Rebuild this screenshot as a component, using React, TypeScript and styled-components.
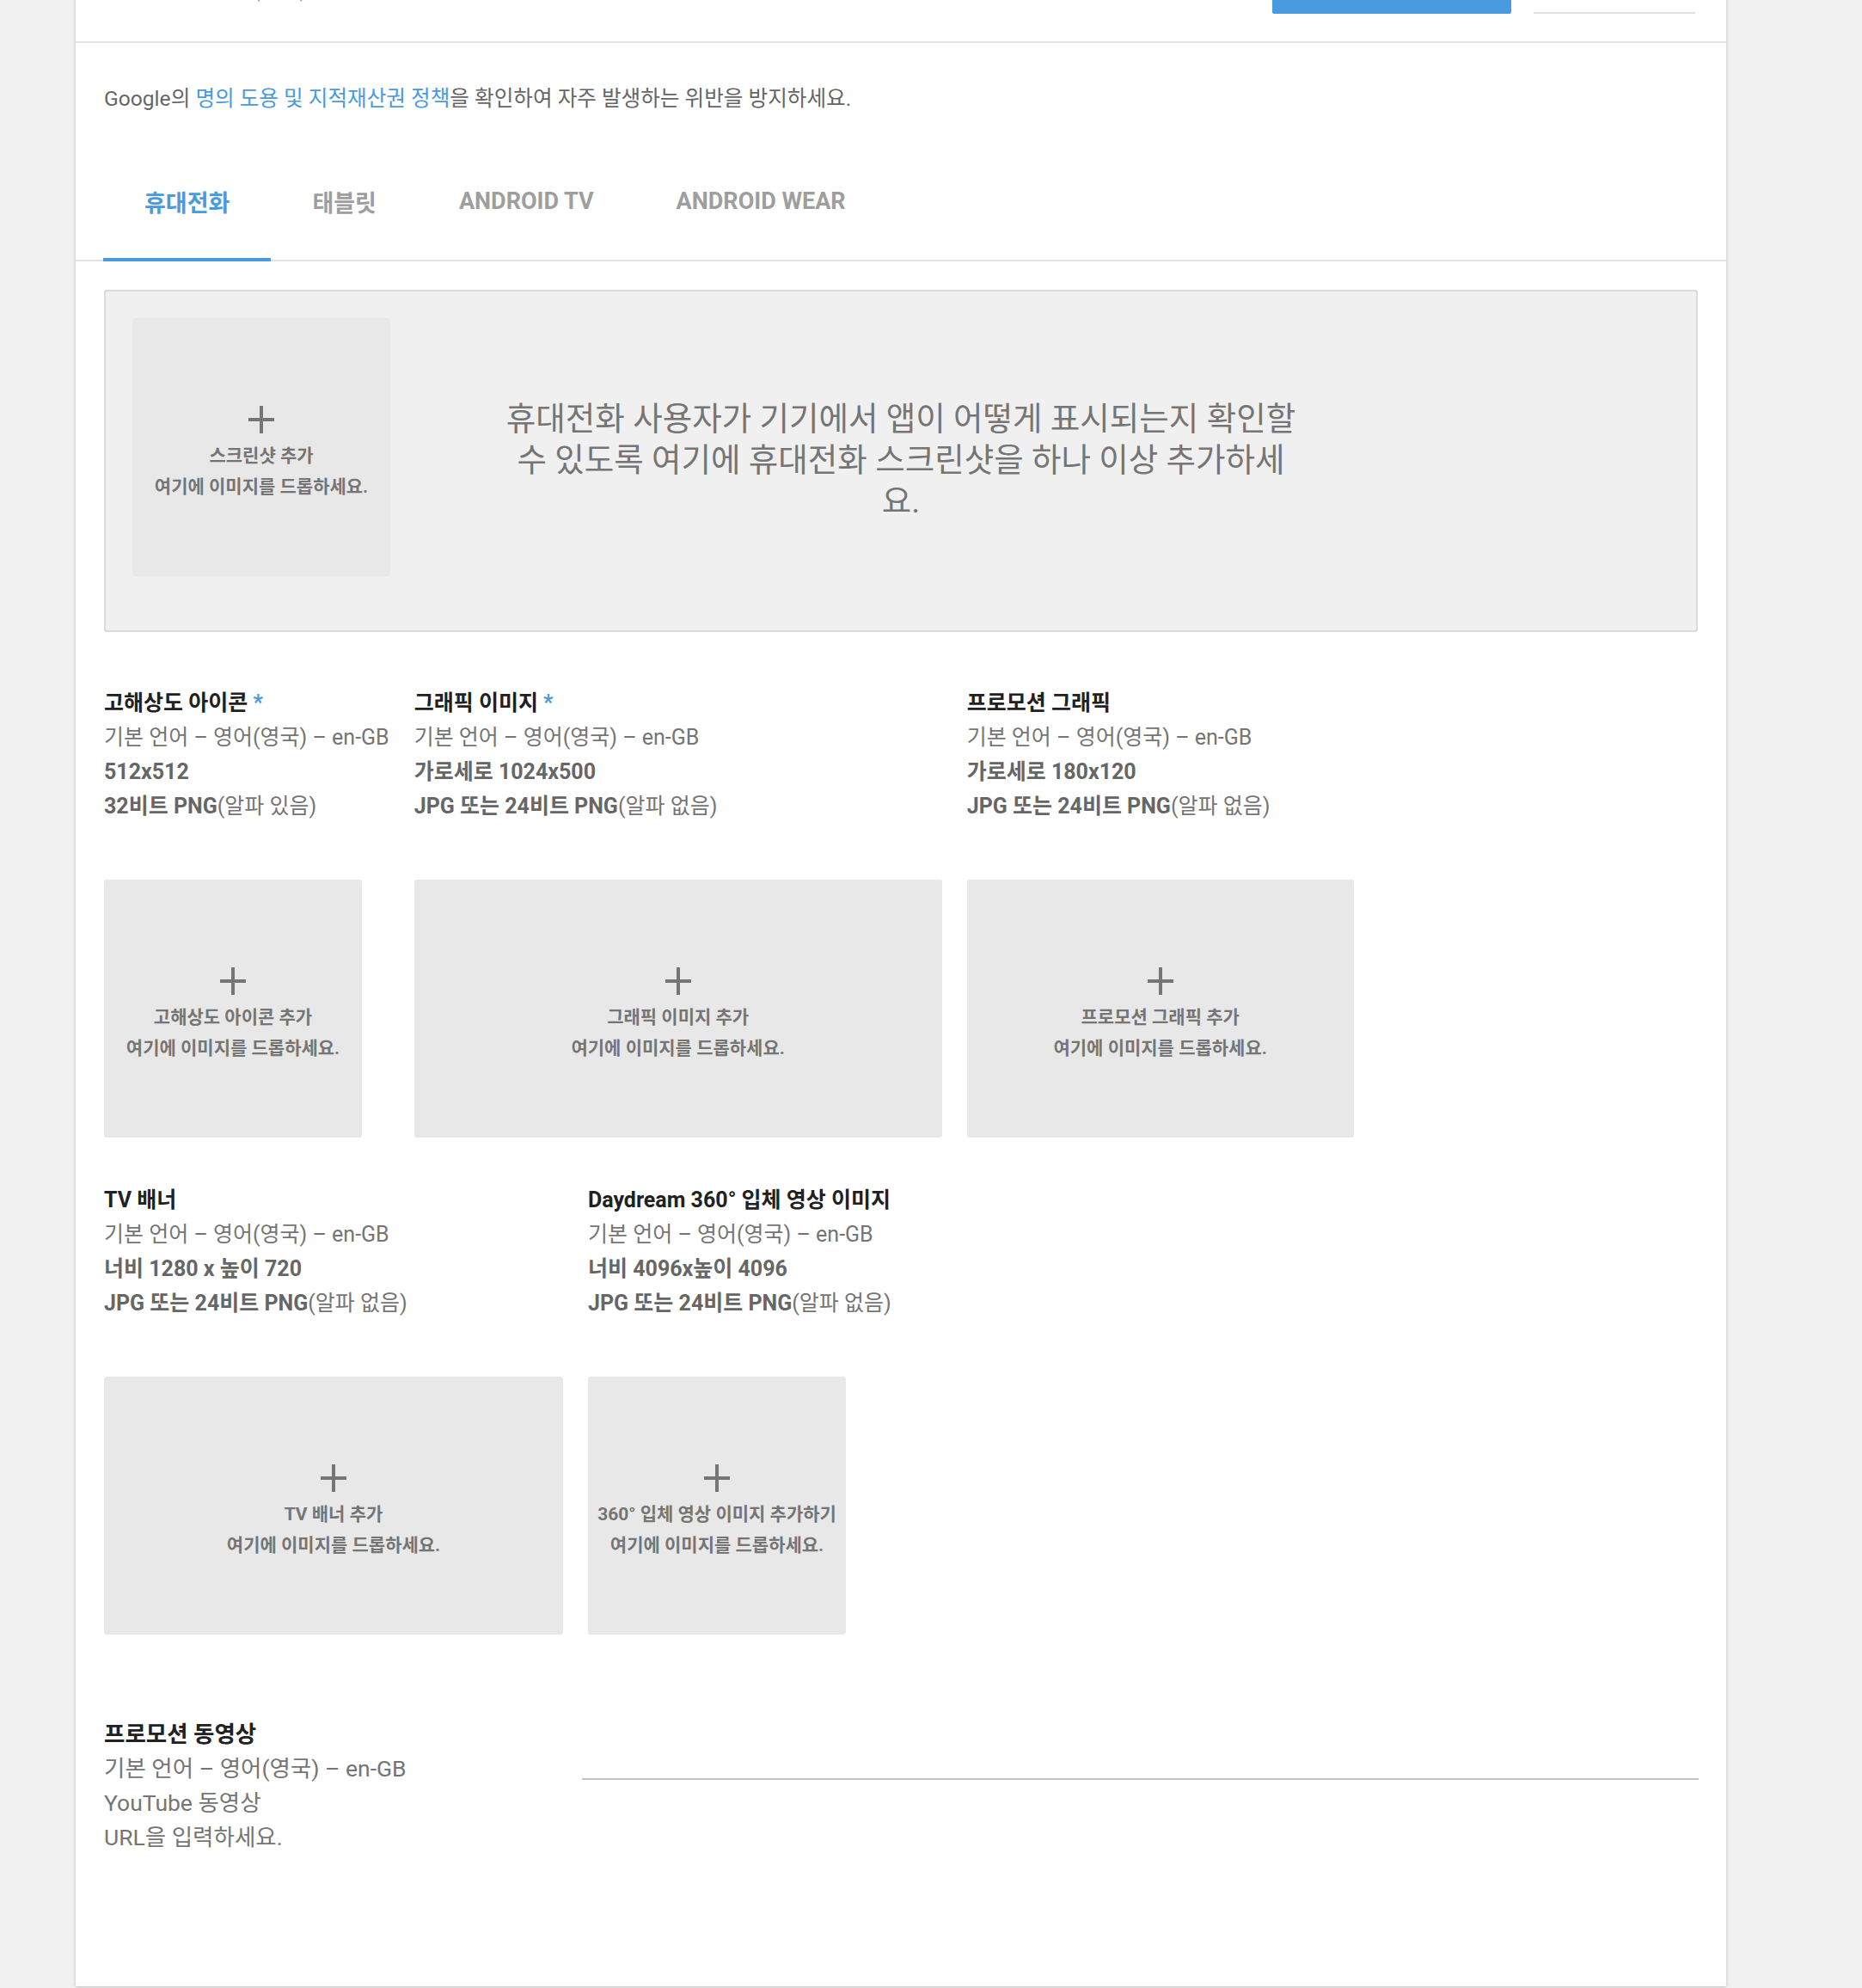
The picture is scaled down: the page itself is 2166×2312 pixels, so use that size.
import React from "react";
import styled, { createGlobalStyle } from "styled-components";

const GlobalStyle = createGlobalStyle`
  *, *::before, *::after { box-sizing: border-box; }
  html, body { margin: 0; padding: 0; }
  body {
    background: #f1f1f1;
    font-family: Roboto, "Noto Sans CJK KR", sans-serif;
    color: #757575;
    overflow: hidden;
  }
`;

const BLUE = "#4a9ae0";

const Page = styled.div`
  padding-left: 88px;
  padding-bottom: 2px;
  height: 2312px;
  overflow: hidden;
`;

const Panel = styled.main`
  width: 1920px;
  margin-top: -56px;
  background: #fff;
  box-shadow: 0 1px 4px rgba(0, 0, 0, 0.22);
`;

const Header = styled.header`
  height: 106px;
  display: flex;
  align-items: flex-start;
  padding: 0 36px 0 33px;
  border-bottom: 2px solid #e2e2e2;
`;

const HeaderTitle = styled.div`
  flex: 1;
  padding-top: 24px;
  font-size: 25px;
  line-height: 40px;
  color: #9e9e9e;
`;

const PrimaryButton = styled.button`
  width: 278px;
  height: 72px;
  border: none;
  border-radius: 2px;
  background: ${BLUE};
  margin-right: 26px;
  padding: 0;
`;

const HeaderField = styled.div`
  width: 188px;
  height: 72px;
  border-bottom: 2px solid #e0e0e0;
`;

const Notice = styled.p`
  margin: 0;
  padding: 45px 33px 0;
  font-size: 24.6px;
  line-height: 40px;
  color: #666;
`;

const Link = styled.a`
  color: ${BLUE};
  text-decoration: none;
`;

const TabBar = styled.nav`
  display: flex;
  margin-top: 25px;
  padding: 0 32px;
  border-bottom: 2px solid #e2e2e2;
`;

const Tab = styled.div<{ $active?: boolean }>`
  height: 144px;
  margin-bottom: -2px;
  padding: 8px 48px 0;
  display: flex;
  align-items: center;
  font-size: 27px;
  font-weight: 700;
  color: ${(p) => (p.$active ? BLUE : "#9e9e9e")};
  border-bottom: 4px solid ${(p) => (p.$active ? BLUE : "transparent")};
`;

const ScreenshotZone = styled.section`
  margin: 33px 33px 0;
  padding: 31px 31px 63px;
  border: 2px solid #dadada;
  border-radius: 3px;
  background: #f0f0f0;
  display: grid;
  grid-template-columns: 300px 1fr 300px;
  align-items: center;
`;

const ZoneMessage = styled.p`
  margin: 0;
  padding-top: 30px;
  text-align: center;
  font-size: 37.5px;
  line-height: 48px;
  color: #757575;
  white-space: nowrap;
`;

const DropTile = styled.div<{ $w: number }>`
  width: ${(p) => p.$w}px;
  height: 300px;
  border-radius: 3px;
  background: #e8e8e8;
  display: flex;
  flex-direction: column;
  align-items: center;
  justify-content: center;
  padding-top: 16px;
  color: #757575;
  font-size: 21px;
  font-weight: 700;
  line-height: 36px;
  white-space: nowrap;
`;

const PlusIcon = styled.svg`
  display: block;
  margin-bottom: 8px;
  fill: #757575;
`;

const Assets = styled.section`
  display: flex;
  flex-direction: column;
  gap: 53px;
  padding: 63px 33px 0;
`;

const AssetRow = styled.div`
  display: flex;
  align-items: flex-start;
  gap: 29px;
`;

const AssetItem = styled.div`
  display: flex;
  flex-direction: column;
  align-items: flex-start;
`;

const Spec = styled.div<{ $size?: number }>`
  margin-bottom: 65px;
  font-size: ${(p) => p.$size ?? 25}px;
  line-height: 40px;
  white-space: nowrap;
`;

const SpecTitle = styled.div`
  font-weight: 700;
  color: #212121;
`;

const Required = styled.span`
  color: ${BLUE};
`;

const SpecLine = styled.div<{ $strong?: boolean }>`
  color: ${(p) => (p.$strong ? "#666" : "#757575")};
  font-weight: ${(p) => (p.$strong ? 700 : 400)};
`;

const Strong = styled.span`
  font-weight: 700;
  color: #666;
`;

const VideoSection = styled.section`
  display: grid;
  grid-template-columns: 556px 1fr;
  margin-top: 96px;
  padding: 0 32px 88px 33px;
`;

const VideoField = styled.div`
  height: 73px;
  border-bottom: 2px solid #c4c4c4;
`;

const Plus = () => (
  <PlusIcon width="30" height="32" viewBox="0 0 30 32" aria-hidden>
    <rect x="13" y="0" width="4" height="32" />
    <rect x="0" y="14" width="30" height="4" />
  </PlusIcon>
);

type Asset = {
  title: string;
  required?: boolean;
  size: string;
  fmtBold: string;
  fmtRest: string;
  tileW: number;
  label: string;
};

const rows: Asset[][] = [
  [
    {
      title: "고해상도 아이콘",
      required: true,
      size: "512x512",
      fmtBold: "32비트 PNG",
      fmtRest: "(알파 있음)",
      tileW: 300,
      label: "고해상도 아이콘 추가",
    },
    {
      title: "그래픽 이미지",
      required: true,
      size: "가로세로 1024x500",
      fmtBold: "JPG 또는 24비트 PNG",
      fmtRest: "(알파 없음)",
      tileW: 614,
      label: "그래픽 이미지 추가",
    },
    {
      title: "프로모션 그래픽",
      size: "가로세로 180x120",
      fmtBold: "JPG 또는 24비트 PNG",
      fmtRest: "(알파 없음)",
      tileW: 450,
      label: "프로모션 그래픽 추가",
    },
  ],
  [
    {
      title: "TV 배너",
      size: "너비 1280 x 높이 720",
      fmtBold: "JPG 또는 24비트 PNG",
      fmtRest: "(알파 없음)",
      tileW: 534,
      label: "TV 배너 추가",
    },
    {
      title: "Daydream 360° 입체 영상 이미지",
      size: "너비 4096x높이 4096",
      fmtBold: "JPG 또는 24비트 PNG",
      fmtRest: "(알파 없음)",
      tileW: 300,
      label: "360° 입체 영상 이미지 추가하기",
    },
  ],
];

const LANG = "기본 언어 – 영어(영국) – en-GB";
const DROP = "여기에 이미지를 드롭하세요.";

export default function App() {
  return (
    <>
      <GlobalStyle />
      <Page>
        <Panel>
          <Header>
            <HeaderTitle>{LANG}</HeaderTitle>
            <PrimaryButton aria-label="저장" />
            <HeaderField />
          </Header>

          <Notice>
            Google의 <Link href="#">명의 도용 및 지적재산권 정책</Link>을 확인하여 자주 발생하는
            위반을 방지하세요.
          </Notice>

          <TabBar>
            <Tab $active>휴대전화</Tab>
            <Tab>태블릿</Tab>
            <Tab>ANDROID TV</Tab>
            <Tab>ANDROID WEAR</Tab>
          </TabBar>

          <ScreenshotZone>
            <DropTile $w={300}>
              <Plus />
              <div>스크린샷 추가</div>
              <div>{DROP}</div>
            </DropTile>
            <ZoneMessage>
              휴대전화 사용자가 기기에서 앱이 어떻게 표시되는지 확인할
              <br />
              수 있도록 여기에 휴대전화 스크린샷을 하나 이상 추가하세
              <br />
              요.
            </ZoneMessage>
          </ScreenshotZone>

          <Assets>
            {rows.map((row, i) => (
              <AssetRow key={i}>
                {row.map((a) => (
                  <AssetItem key={a.title}>
                    <Spec>
                      <SpecTitle>
                        {a.title}
                        {a.required && <Required> *</Required>}
                      </SpecTitle>
                      <SpecLine>{LANG}</SpecLine>
                      <SpecLine $strong>{a.size}</SpecLine>
                      <SpecLine>
                        <Strong>{a.fmtBold}</Strong>
                        {a.fmtRest}
                      </SpecLine>
                    </Spec>
                    <DropTile $w={a.tileW}>
                      <Plus />
                      <div>{a.label}</div>
                      <div>{DROP}</div>
                    </DropTile>
                  </AssetItem>
                ))}
              </AssetRow>
            ))}
          </Assets>

          <VideoSection>
            <Spec $size={26.5}>
              <SpecTitle>프로모션 동영상</SpecTitle>
              <SpecLine>{LANG}</SpecLine>
              <SpecLine>YouTube 동영상</SpecLine>
              <SpecLine>URL을 입력하세요.</SpecLine>
            </Spec>
            <VideoField />
          </VideoSection>
        </Panel>
      </Page>
    </>
  );
}
